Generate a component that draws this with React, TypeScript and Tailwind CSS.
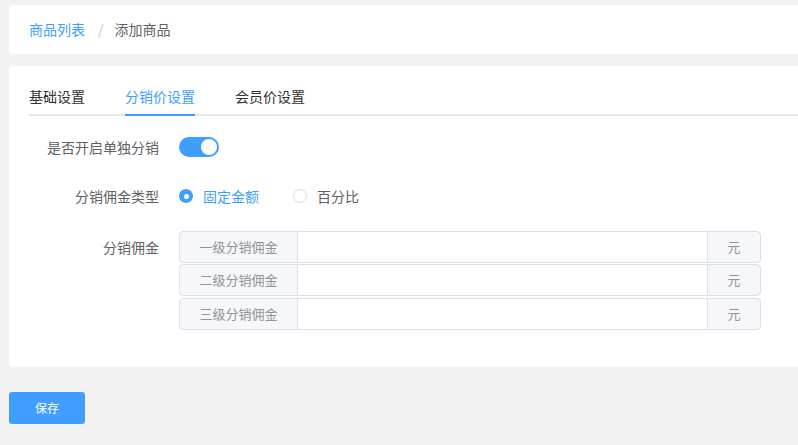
import React from "react";

const font = { fontFamily: '"Noto Sans CJK SC", "Noto Sans", sans-serif' };

function InputRow({ label, className }: { label: string; className?: string }) {
  return (
    <div className={`flex h-[32px] w-[582px] ${className ?? ""}`}>
      <div className="flex w-[119px] items-center justify-center rounded-l-[4px] border border-[#dcdfe6] bg-[#f5f7fa] text-[13px] text-[#909399]">
        {label}
      </div>
      <div className="flex-1 border-y border-[#dcdfe6] bg-white" />
      <div className="flex w-[54px] items-center justify-center rounded-r-[4px] border border-[#dcdfe6] bg-[#f5f7fa] text-[13px] text-[#909399]">
        元
      </div>
    </div>
  );
}

export default function App() {
  return (
    <div className="h-[445px] w-[798px] overflow-hidden bg-[#f2f2f2] pt-[5px]" style={font}>
      {/* breadcrumb card */}
      <div className="ml-[9px] flex h-[49px] items-center rounded-l-[4px] bg-white pl-[20px] text-[14px]">
        <span className="text-[#409eff]">商品列表</span>
        <span className="ml-[13px] mr-[11px] text-[#c0c4cc]">/</span>
        <span className="text-[#606266]">添加商品</span>
      </div>

      {/* main card */}
      <div className="ml-[9px] mt-[12px] h-[301px] rounded-l-[4px] bg-white pl-[20px] pt-[10px]">
        {/* tabs */}
        <div className="relative flex h-[40px] items-center text-[14px]">
          <div className="absolute bottom-0 left-0 right-0 h-[2px] bg-[#e4e7ed]" />
          <div className="relative flex h-full items-center pr-[20px] text-[#303133]">基础设置</div>
          <div className="relative flex h-full items-center px-[20px] text-[#409eff]">
            分销价设置
            <div className="absolute bottom-0 left-[20px] right-[20px] h-[2px] bg-[#409eff]" />
          </div>
          <div className="relative flex h-full items-center px-[20px] text-[#303133]">会员价设置</div>
        </div>

        {/* form */}
        <div className="text-[14px] text-[#606266]">
          <div className="mt-[11px] flex h-[40px] items-center">
            <div className="w-[150px] shrink-0 whitespace-nowrap pr-[20px] text-right">是否开启单独分销</div>
            <div className="relative h-[20px] w-[40px] rounded-full bg-[#409eff]">
              <div className="absolute right-[2px] top-[2px] h-[16px] w-[16px] rounded-full bg-white" />
            </div>
          </div>

          <div className="mt-[9px] flex h-[40px] items-center">
            <div className="w-[150px] shrink-0 whitespace-nowrap pr-[20px] text-right">分销佣金类型</div>
            <div className="flex items-center">
              <div className="flex h-[14px] w-[14px] items-center justify-center rounded-full bg-[#409eff]">
                <div className="h-[5px] w-[5px] rounded-full bg-white" />
              </div>
              <span className="ml-[10px] text-[#409eff]">固定金额</span>
            </div>
            <div className="ml-[34px] flex items-center">
              <div className="h-[14px] w-[14px] rounded-full border border-[#dcdfe6] bg-white" />
              <span className="ml-[10px]">百分比</span>
            </div>
          </div>

          <div className="mt-[15px] flex">
            <div className="flex h-[32px] w-[150px] shrink-0 items-center justify-end whitespace-nowrap pr-[20px]">分销佣金</div>
            <div className="flex flex-col">
              <InputRow label="一级分销佣金" />
              <InputRow label="二级分销佣金" className="mt-[1px]" />
              <InputRow label="三级分销佣金" className="mt-[2px]" />
            </div>
          </div>
        </div>
      </div>

      <button className="ml-[9px] mt-[25px] flex h-[32px] w-[76px] items-center justify-center rounded-[3px] bg-[#409eff] text-[12px] text-white">
        保存
      </button>
    </div>
  );
}
